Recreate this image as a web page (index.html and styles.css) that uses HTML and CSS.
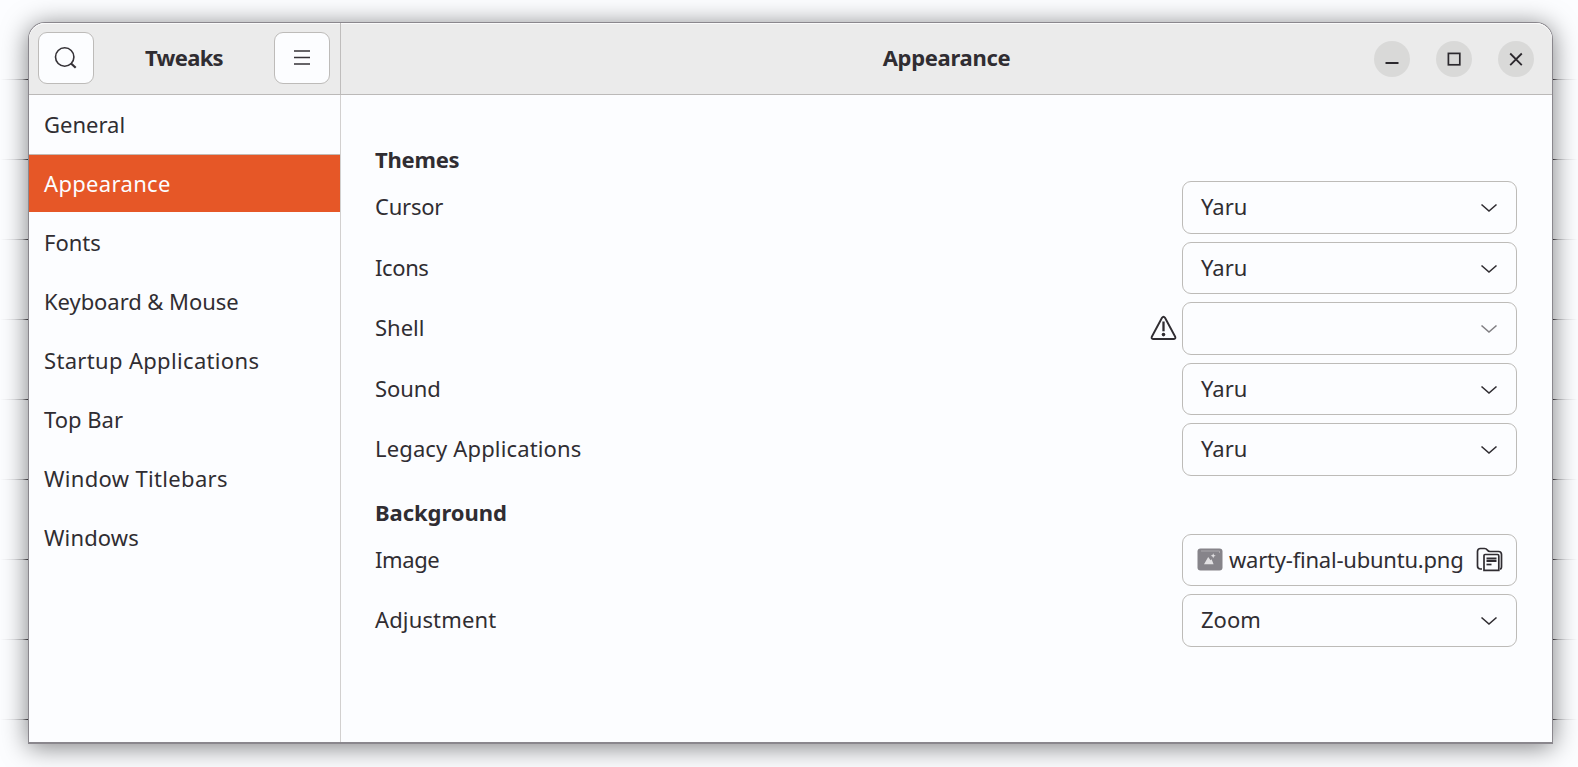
FILE: index.html
```html
<!DOCTYPE html>
<html lang="en">
<head>
<meta charset="utf-8">
<title>Tweaks</title>
<link rel="stylesheet" href="styles.css">
</head>
<body>
<svg class="defs" width="0" height="0"><defs>
<symbol id="chevron" viewBox="0 0 18 10"><path d="M1.500 1.500 9 8 16.500 1.500" fill="none" stroke="currentColor" stroke-width="1.6"/></symbol>
</defs></svg>
<div class="rules rules-left"></div>
<div class="window">
  <header class="titlebar">
    <div class="side-head">
      <button class="tool"><svg width="26" height="26" viewBox="0 0 26 26" fill="none" stroke="#353237" stroke-width="1.6"><circle cx="11.7" cy="12" r="9.2"/><path d="M17.800 18.300l4.900 4.500" stroke-width="2.2"/></svg></button>
      <h1 class="t-tweaks">Tweaks</h1>
      <button class="tool"><svg width="18" height="18" viewBox="0 0 18 18" stroke="#353237" stroke-width="1.4"><path d="M1 2h16M1 8.500h16M1 15h16"/></svg></button>
    </div>
    <div class="main-head">
      <h1 class="t-apphead">Appearance</h1>
      <div class="controls">
        <button class="ctl"><svg width="14" height="14" viewBox="0 0 14 14"><path d="M.5 11h13" stroke="#2b282d" stroke-width="2"/></svg></button>
        <button class="ctl"><svg width="14" height="14" viewBox="0 0 14 14"><rect x="1.400" y="1.400" width="11.400" height="11.400" fill="none" stroke="#2b282d" stroke-width="1.700"/></svg></button>
        <button class="ctl"><svg width="14" height="14" viewBox="0 0 14 14"><path d="M1.200 1.500l11.600 11.600M12.800 1.500L1.200 13.100" stroke="#2b282d" stroke-width="1.800"/></svg></button>
      </div>
    </div>
  </header>
  <div class="body">
    <nav class="sidebar">
      <a class="item"><span>General</span></a>
      <a class="item active"><span class="wide">Appearance</span></a>
      <a class="item"><span>Fonts</span></a>
      <a class="item"><span class="snug">Keyboard &amp; Mouse</span></a>
      <a class="item"><span class="wide">Startup Applications</span></a>
      <a class="item"><span>Top Bar</span></a>
      <a class="item"><span class="wide">Window Titlebars</span></a>
      <a class="item"><span class="loose">Windows</span></a>
    </nav>
    <main class="content">
      <h2><span class="tight">Themes</span></h2>
      <div class="row"><span class="tight">Cursor</span><div class="select"><span>Yaru</span><svg class="chev"><use href="#chevron"/></svg></div></div>
      <div class="row"><span class="tighter">Icons</span><div class="select"><span>Yaru</span><svg class="chev"><use href="#chevron"/></svg></div></div>
      <div class="row"><span>Shell</span><svg class="warn" width="27" height="26" viewBox="0 0 27 26" fill="none" stroke="#302d32" stroke-width="1.9" stroke-linejoin="round"><path d="M12 2.800Q13.500.6 15 2.800L25.200 21.700Q25.900 24 24 24H3Q1.100 24 1.800 21.700Z"/><path d="M13.500 6.500v9.800" stroke-width="2.300"/><circle cx="13.500" cy="19.600" r="1.800" fill="#302d32" stroke="none"/></svg><div class="select"><span></span><svg class="chev dim"><use href="#chevron"/></svg></div></div>
      <div class="row"><span class="snug">Sound</span><div class="select"><span>Yaru</span><svg class="chev"><use href="#chevron"/></svg></div></div>
      <div class="row"><span class="loose">Legacy Applications</span><div class="select"><span>Yaru</span><svg class="chev"><use href="#chevron"/></svg></div></div>
      <h2 class="second"><span class="snug">Background</span></h2>
      <div class="row"><span class="tighter">Image</span><div class="select file">
        <svg class="pic" width="26" height="23" viewBox="0 0 26 23"><rect x=".5" y=".5" width="25" height="22" rx="3" fill="#86848a"/><path d="M4 3h18.500v2" fill="none" stroke="#aaa8ac" stroke-width="1"/><path d="M7 16.300 11.200 9l2.400 3.300 1-1 2 5z" fill="#e2e1e3"/><path d="M16.200 5.200l.7 1.800 1.800.7-1.800.7-.7 1.800-.7-1.800-1.800-.7 1.800-.7z" fill="#e2e1e3"/></svg>
        <span class="tight">warty-final-ubuntu.png</span>
        <svg class="folder" width="27" height="26" viewBox="0 0 27 26" fill="none" stroke="#302d32" stroke-width="1.7"><path d="M6 22H4.500Q1.500 22 1.500 19V4.500Q1.500 1.500 4.500 1.500H8.500Q10.300 1.500 11.300 3 12.300 4.500 14 4.500H22.500Q25.500 4.500 25.500 7.500V19.500Q25.500 22 24 22"/><path d="M9 7.500H21.500Q22.800 7.500 22.800 9V23.300H8V8.500Q8 7.500 9 7.500Z"/><path d="M10.500 11.500h10M10.500 14h10" stroke-width="1.900"/><path d="M10.500 17.500h5"/></svg>
      </div></div>
      <div class="row"><span class="loose">Adjustment</span><div class="select"><span>Zoom</span><svg class="chev"><use href="#chevron"/></svg></div></div>
    </main>
  </div>
</div>
<div class="rules rules-right"></div>
</body>
</html>
```
FILE: styles.css
```css
* { box-sizing: border-box; }
body {
  margin: 0;
  width: 1578px;
  height: 767px;
  overflow: hidden;
  display: grid;
  grid-template-columns: 28px 1525px 25px;
  background: #fcfdff;
  color: #302d32;
  font: 22px/30px "Noto Sans", sans-serif;
}
.defs { position: absolute; }

/* ruled page lines that show at both sides of the window */
.rules {
  height: 767px;
  -webkit-mask: repeating-linear-gradient(to bottom, transparent 0 79px, #000 79px 80px);
  mask: repeating-linear-gradient(to bottom, transparent 0 79px, #000 79px 80px);
  position: relative;
  z-index: 1;
}
.rules-left { background: linear-gradient(to right, transparent, rgba(48,45,50,.12) 50%, rgba(48,45,50,.3) 80%, #302d32); }
.rules-right { background: linear-gradient(to left, transparent, rgba(48,45,50,.12) 50%, rgba(48,45,50,.3) 80%, #302d32); }

.window {
  height: 722px;
  margin-top: 22px;
  display: flex;
  flex-direction: column;
  border: 1px solid #8a878d;
  border-bottom-width: 2px;
  border-radius: 17px 17px 0 0;
  box-shadow: 0 3px 26px rgba(0, 0, 0, .5);
  background: #fcfdff;
}
.titlebar {
  height: 72px;
  flex: none;
  display: flex;
  background: #ebebeb;
  border-bottom: 1px solid #bbb9b8;
  border-radius: 16px 16px 0 0;
  box-shadow: inset 0 1px #fafafa;
}
h1, h2 { margin: 0; font-size: 22px; line-height: 30px; font-weight: 700; }
h1 { padding-bottom: 3px; }
.side-head {
  width: 312px;
  padding: 9px 10px 10px 9px;
  display: flex;
  align-items: center;
  justify-content: space-between;
  border-right: 1px solid #bfbdbc;
}
button { padding: 0; border: 0; display: flex; align-items: center; justify-content: center; }
.tool { width: 56px; height: 52px; border: 1px solid #bdbbb9; border-radius: 9px; background: #fcfdff; }
.main-head { flex: 1; display: grid; grid-template-columns: 1fr auto 1fr; align-items: center; }
.main-head h1 { grid-column: 2; }
.controls { display: flex; gap: 26px; justify-content: flex-end; padding-right: 18px; }
.ctl { width: 36px; height: 36px; border-radius: 50%; background: #d9d9d8; }

.t-tweaks { letter-spacing: -.7px; }
.t-apphead { letter-spacing: -.3px; }
.wide { letter-spacing: .33px; }
.loose { letter-spacing: .14px; }
.snug { letter-spacing: -.06px; }
.tight { letter-spacing: -.22px; }
.tighter { letter-spacing: -.4px; }

.body { flex: 1; display: flex; }
.sidebar { width: 312px; border-right: 1px solid #d2d0cf; }
.item { height: 59px; display: flex; align-items: center; padding: 0 0 1px 15px; white-space: nowrap; }
.active {
  height: 58px;
  margin-bottom: 1px;
  background: #e65727;
  color: #fcfdff;
  border-top: 1px solid #c3b9b2;
}
.content { flex: 1; padding: 49px 35px 0 34px; }
.content h2 { height: 37px; }
.content h2.second { height: 50px; padding-top: 13px; }
.row { height: 60.5px; display: flex; align-items: flex-start; white-space: nowrap; }
.row > span { line-height: 50px; margin-right: auto; }
.select {
  width: 335px;
  height: 52.5px;
  padding: 0 18px;
  display: flex;
  align-items: center;
  justify-content: space-between;
  border: 1px solid #bdbbb8;
  border-radius: 9px;
  background: #fcfdff;
}
.select span { padding-bottom: 2px; }
.chev { width: 18px; height: 10px; margin-top: 2px; }
.dim { opacity: .6; }
.warn { margin: 13px 5px 0 0; }
.file { padding: 0 13px 0 14px; justify-content: flex-start; }
.file span { margin-left: 6px; }
.folder { margin-left: auto; }
```
